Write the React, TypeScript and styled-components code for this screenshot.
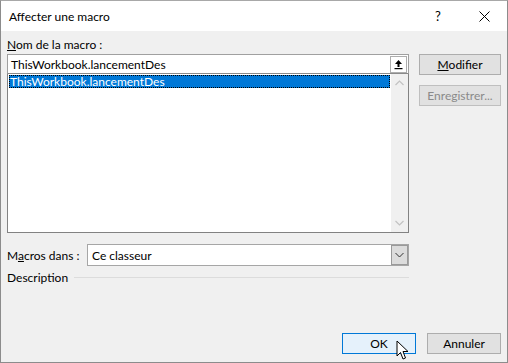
import styled, { createGlobalStyle } from "styled-components";

const Global = createGlobalStyle`
  html, body { margin: 0; padding: 0; background: #fff; }
  body { font-family: Lato, "Noto Sans", "Liberation Sans", sans-serif; font-size: 12px; color: #000; }
`;

const Window = styled.div`
  position: relative;
  width: 508px;
  height: 363px;
  box-sizing: border-box;
  border: 1px solid #8c8c8c;
  border-top-color: #a8a8a8;
  display: flex;
  flex-direction: column;
  background: #f0f0f0;
`;

const TitleBar = styled.div`
  height: 30px;
  background: #fff;
  display: flex;
  align-items: center;
  padding-left: 8px;
  font-size: 12px;
`;

const Title = styled.span`
  flex: 1;
`;

const TitleButton = styled.div`
  width: 46px;
  height: 30px;
  display: flex;
  align-items: center;
  justify-content: center;
  font-size: 13px;
`;

const Body = styled.div`
  flex: 1;
  display: flex;
  flex-direction: column;
  padding: 6px 6px 8px 6px;
`;

const Top = styled.div`
  display: grid;
  grid-template-columns: 402px 82px;
  column-gap: 10px;
`;

const MainCol = styled.div`
  display: flex;
  flex-direction: column;
`;

const SideCol = styled.div`
  display: flex;
  flex-direction: column;
  gap: 10px;
  padding-top: 17px;
`;

const Label = styled.div`
  height: 16px;
  line-height: 16px;
  margin-bottom: 1px;
`;

const EditBox = styled.div`
  height: 18px;
  border: 1px solid #a0a0a0;
  border-bottom-color: #8a8a8a;
  background: #fff;
  display: flex;
  align-items: center;
  padding-left: 3px;
  padding-right: 1px;
`;

const EditText = styled.span`
  flex: 1;
`;

const UpButton = styled.div`
  width: 15px;
  height: 15px;
  border: 1px solid #adadad;
  background: #fff;
  display: flex;
  align-items: center;
  justify-content: center;
`;

const List = styled.div`
  height: 158px;
  border: 1px solid #828282;
  border-top: none;
  background: #fff;
  display: flex;
`;

const ListItems = styled.div`
  flex: 1;
  padding: 1px 1px;
`;

const Item = styled.div<{ $selected?: boolean }>`
  height: 13px;
  line-height: 13px;
  padding: 0 1px;
  background: ${(p) => (p.$selected ? "#0078d7" : "transparent")};
  color: ${(p) => (p.$selected ? "#fff" : "#000")};
  outline: ${(p) => (p.$selected ? "1px dotted #000" : "none")};
  outline-offset: -1px;
`;

const ScrollBar = styled.div`
  width: 17px;
  background: #f0f0f0;
  display: flex;
  flex-direction: column;
  justify-content: space-between;
  align-items: center;
  padding: 6px 0;
`;

const Row = styled.div`
  display: flex;
  align-items: center;
  margin-top: 11px;
`;

const RowLabel = styled.span`
  width: 80px;
`;

const Select = styled.div`
  flex: 1;
  height: 20px;
  border: 1px solid #a6a6a6;
  background: #fff;
  display: flex;
  align-items: center;
  padding-left: 4px;
`;

const SelectText = styled.span`
  flex: 1;
`;

const DropButton = styled.div`
  width: 15px;
  height: 18px;
  border: 1px solid #9a9a9a;
  background: #dcdcdc;
  display: flex;
  align-items: center;
  justify-content: center;
`;

const Fieldset = styled.div`
  display: flex;
  align-items: center;
  gap: 6px;
  margin-top: 1px;
  height: 20px;
`;

const Rule = styled.div`
  flex: 1;
  height: 1px;
  background: #dcdcdc;
`;

const Footer = styled.div`
  margin-top: auto;
  display: flex;
  justify-content: flex-end;
  gap: 11px;
`;

const Button = styled.div<{ $width?: number; $primary?: boolean; $disabled?: boolean }>`
  width: ${(p) => p.$width ?? 82}px;
  height: 21px;
  box-sizing: border-box;
  border: 1px solid ${(p) => (p.$primary ? "#0078d7" : p.$disabled ? "#bfbfbf" : "#adadad")};
  background: ${(p) => (p.$primary ? "#e5f1fb" : "#e1e1e1")};
  color: ${(p) => (p.$disabled ? "#8a8a8a" : "#000")};
  display: flex;
  align-items: center;
  justify-content: center;
`;

const Cursor = styled.svg`
  position: absolute;
  left: 395px;
  top: 339px;
`;

export default function App() {
  return (
    <>
      <Global />
      <Window>
        <TitleBar>
          <Title>Affecter une macro</Title>
          <TitleButton>?</TitleButton>
          <TitleButton>
            <svg width="11" height="11" viewBox="0 0 11 11">
              <path d="M0.5 0.5 L10.5 10.5 M10.5 0.5 L0.5 10.5" stroke="#000" strokeWidth="1" />
            </svg>
          </TitleButton>
        </TitleBar>
        <Body>
          <Top>
            <MainCol>
              <Label>
                <u>N</u>om de la macro :
              </Label>
              <EditBox>
                <EditText>ThisWorkbook.lancementDes</EditText>
                <UpButton>
                  <svg width="11" height="11" viewBox="0 0 11 11">
                    <path d="M5.5 1 L9 5 L6.5 5 L6.5 8 L4.5 8 L4.5 5 L2 5 Z" fill="#000" />
                    <rect x="1.5" y="9" width="8" height="1.2" fill="#000" />
                  </svg>
                </UpButton>
              </EditBox>
              <List>
                <ListItems>
                  <Item $selected>ThisWorkbook.lancementDes</Item>
                </ListItems>
                <ScrollBar>
                  <svg width="9" height="6" viewBox="0 0 9 6">
                    <path d="M0.5 5 L4.5 1 L8.5 5" fill="none" stroke="#c2c2c2" strokeWidth="1.2" />
                  </svg>
                  <svg width="9" height="6" viewBox="0 0 9 6">
                    <path d="M0.5 1 L4.5 5 L8.5 1" fill="none" stroke="#c2c2c2" strokeWidth="1.2" />
                  </svg>
                </ScrollBar>
              </List>
              <Row>
                <RowLabel>
                  M<u>a</u>cros dans :
                </RowLabel>
                <Select>
                  <SelectText>Ce classeur</SelectText>
                  <DropButton>
                    <svg width="9" height="6" viewBox="0 0 9 6">
                      <path d="M0.5 1 L4.5 5 L8.5 1" fill="none" stroke="#333" strokeWidth="1" />
                    </svg>
                  </DropButton>
                </Select>
              </Row>
              <Fieldset>
                <span>Description</span>
                <Rule />
              </Fieldset>
            </MainCol>
            <SideCol>
              <Button>
                <u>M</u>odifier
              </Button>
              <Button $disabled>Enregistrer...</Button>
            </SideCol>
          </Top>
          <Footer>
            <Button $primary $width={74}>OK</Button>
            <Button $width={74}>Annuler</Button>
          </Footer>
        </Body>
        <Cursor width="14" height="22" viewBox="0 0 14 22">
          <path d="M1 1 L1 16 L4.5 12.5 L7 19 L9.5 18 L7 11.5 L12 11.5 Z" fill="#fff" stroke="#000" strokeWidth="1" strokeLinejoin="round" />
        </Cursor>
      </Window>
    </>
  );
}
